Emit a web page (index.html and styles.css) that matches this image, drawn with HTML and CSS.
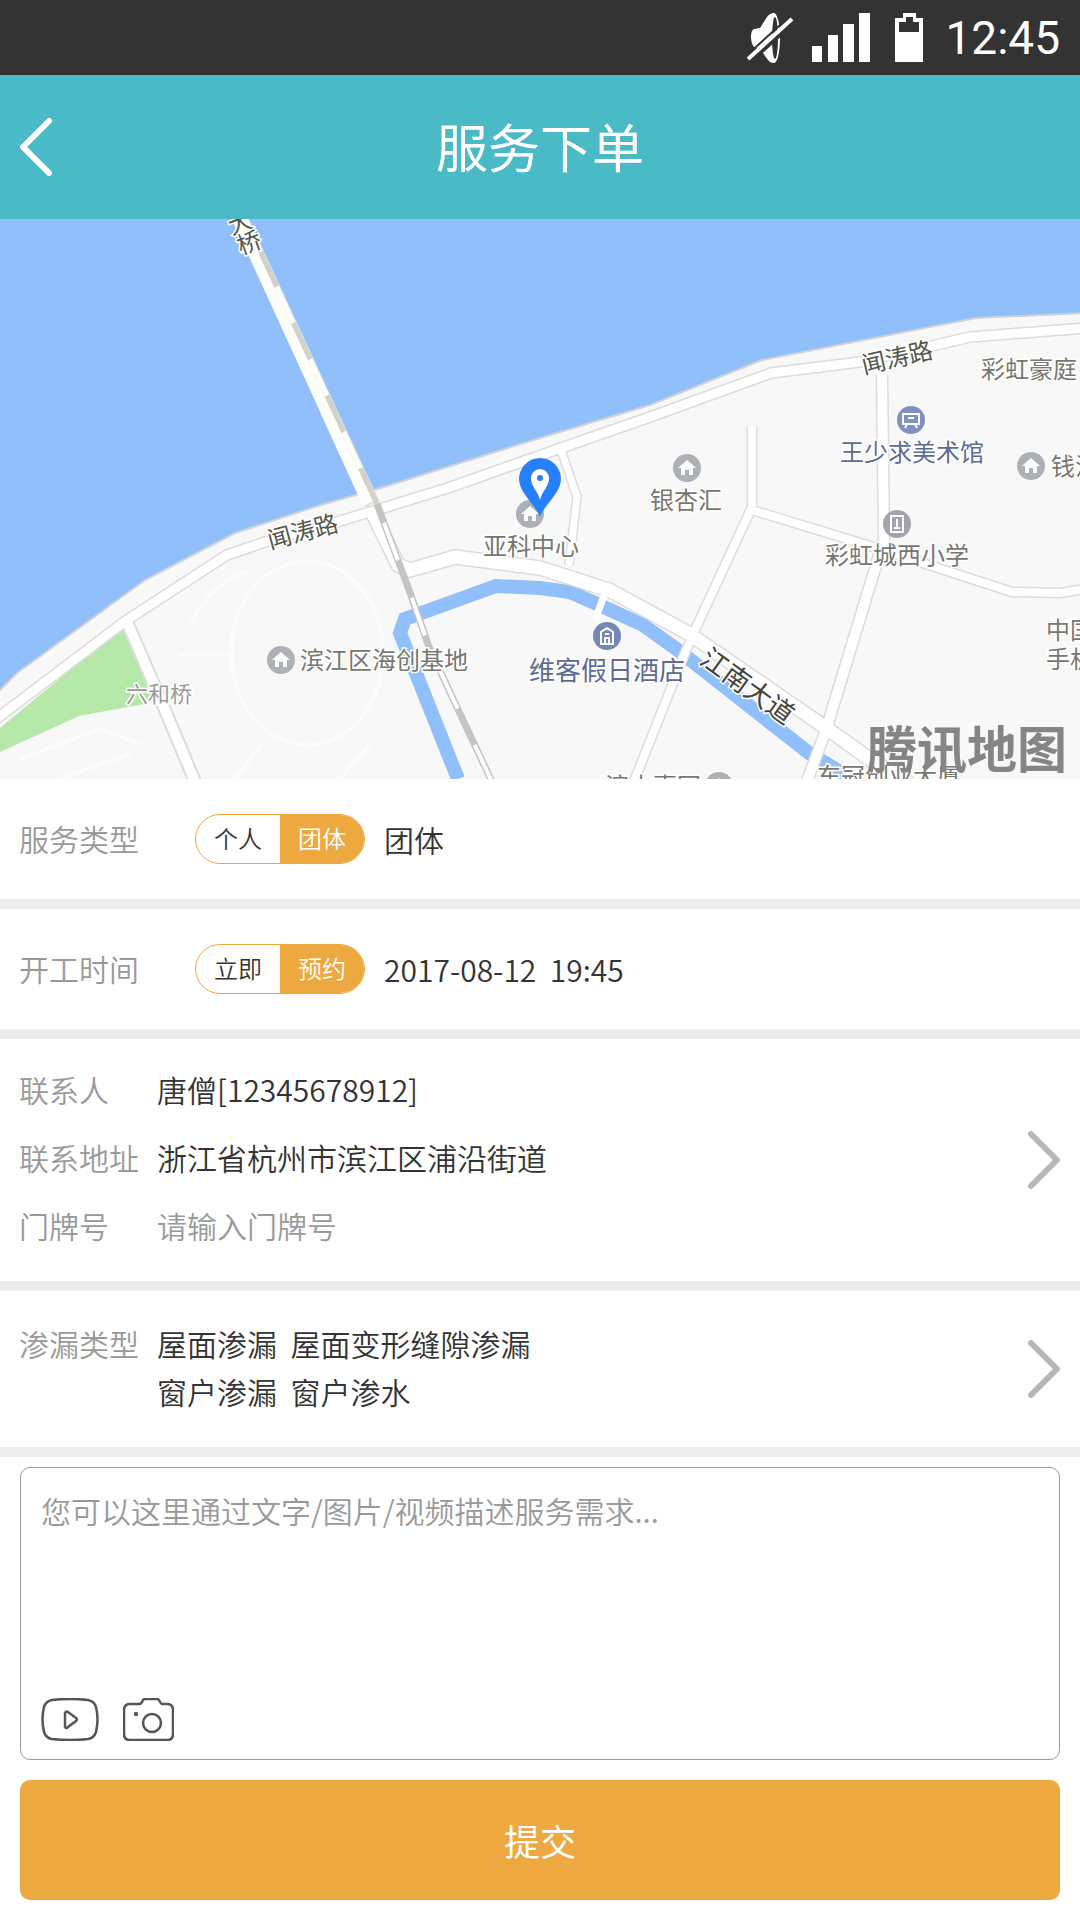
FILE: index.html
```html
<!DOCTYPE html>
<html lang="zh-CN">

<head>
    <meta charset="UTF-8">
    <meta name="viewport" content="width=device-width, initial-scale=1.0">
    <title>服务下单</title>
    <link rel="stylesheet" href="styles.css">
</head>

<body>
    <div class="status-bar">
        <svg class="mute" width="46" height="50" viewBox="0 0 46 50">
            <path d="M4 24 Q4 17 7 16 L13 15 L20 4 Q23 0 27 0 V50 Q23 50 21 47 L13 36 L7 34 Q4 30 4 24Z" fill="#fff" />
            <ellipse cx="27" cy="25" rx="6" ry="25" fill="#fff" />
            <ellipse cx="28" cy="25" rx="3" ry="21" fill="#333" />
            <path d="M3 49 L46 10" stroke="#333" stroke-width="4" />
            <path d="M-1 43 L43 3" stroke="#333" stroke-width="2" />
            <path d="M1 46 L45 6" stroke="#fff" stroke-width="4" />
        </svg>
        <svg class="signal" width="58" height="49" viewBox="0 0 58 49" fill="#fff">
            <path d="M0 33h10v16H0zM16 22h10v27H16zM31 11h11v38H31zM47 0h11v49H47z" />
        </svg>
        <svg class="battery" width="28" height="49" viewBox="0 0 28 49">
            <path fill="#fff" fill-rule="evenodd" d="M0 5h8V0h13v5h7v44H0zM4 9v10h20V9h-6V4h-7v5z" />
        </svg>
        <span class="time">12:45</span>
    </div>

    <header class="header">
        <a class="back" href="#" aria-label="返回">
            <svg width="32" height="58" viewBox="0 0 32 58">
                <path d="M29 3 L3 29 L29 55" />
            </svg>
        </a>
        <h1>服务下单</h1>
    </header>

    <svg class="map" viewBox="0 0 1080 560" preserveAspectRatio="xMidYMid slice" role="img" aria-label="地图">
        <defs>
            <g id="home">
                <circle r="14" fill="#adb0b4" />
                <path d="M0 -8 L9 0 H6 V7 H2 V2 H-2 V7 H-6 V0 H-9Z" fill="#fff" />
            </g>
        </defs>
        <rect width="1080" height="560" fill="#91bffb" />
        <!-- river bank -->
        <path d="M-5 476 L17 454 L145 361 L235 314 L324 285 L374 271 L540 219 L650 186 L762 141 L976 99 L1085 94 V565 H-5Z" fill="#f8f8f8" stroke="#cfd2d4" stroke-width="2" />
        <path d="M122 408 L146 464 L155 483 L79 497 L0 533 V509Z" fill="#b5e8a9" />

        <!-- paths inside the blocks -->
        <g class="paths">
            <ellipse cx="307" cy="434" rx="76" ry="92" />
            <path d="M190 405 Q215 360 250 352 M180 436 H232 M370 525 L340 560 M262 525 L235 560 M20 540 L100 510 L140 525 M60 560 L130 535" />
        </g>

        <!-- canal -->
        <path class="canal" d="M458 560 L400 414 L405 400 L496 367 L540 369 L570 373 L595 384 L643 406 L678 431 L809 534 L845 556" />

        <!-- roads, edges first and then the surface -->
        <g class="road-edge">
            <path stroke-width="12" d="M-5 501 L124 403 L227 336 L265 323 L337 303 L448 269 L561 229 L650 198 L771 154 L860 143 L936 126 L970 118 L1085 109" />
            <path stroke-width="14" d="M127 403 L162 484 L196 565" />
            <path stroke-width="16" d="M372 293 L398 346 L410 351 L455 338 L540 349 L609 371 L688 414 L829 511 L871 541 L910 565" />
            <path stroke-width="10" d="M561 231 L577 278 L569 346" />
            <path stroke-width="11" d="M752 208 V288 L695 411 L685 434 L633 565" />
            <path stroke-width="11" d="M752 291 L867 326 L1012 373 L1060 374 L1085 370" />
            <path stroke-width="13" d="M882 156 L884 320 L826 511 L806 565" />
        </g>
        <g class="road">
            <path stroke-width="9" d="M-5 501 L124 403 L227 336 L265 323 L337 303 L448 269 L561 229 L650 198 L771 154 L860 143 L936 126 L970 118 L1085 109" />
            <path stroke-width="10" d="M127 403 L162 484 L196 565" />
            <path stroke-width="13" d="M372 293 L398 346 L410 351 L455 338 L540 349 L609 371 L688 414 L829 511 L871 541 L910 565" />
            <path stroke-width="7" d="M561 231 L577 278 L569 346" />
            <path stroke-width="8" d="M752 208 V288 L695 411 L685 434 L633 565" />
            <path stroke-width="8" d="M752 291 L867 326 L1012 373 L1060 374 L1085 370" />
            <path stroke-width="10" d="M882 156 L884 320 L826 511 L806 565" />
            <path stroke-width="7" d="M605 374 L595 401" />
        </g>

        <!-- bridge and railway -->
        <path d="M238 -5 L372 285" stroke="#dcdfdc" stroke-width="16" />
        <path d="M236 -5 L368 285" stroke="#fdfdf9" stroke-width="11" />
        <path d="M243 -5 L377 285" stroke="#d2d2cb" stroke-width="5" />
        <path d="M243 -5 L377 285" stroke="#fdfdf9" stroke-width="5" stroke-dasharray="40 40" />
        <path d="M377 285 L408 368 L429 428 L455 484 L493 565" fill="none" stroke="#c4c4c4" stroke-width="7" />
        <path d="M377 285 L408 368 L429 428 L455 484 L493 565" fill="none" stroke="#fff" stroke-width="4" stroke-dasharray="40 40" stroke-dashoffset="60" />

        <!-- places -->
        <use href="#home" x="687" y="249" />
        <use href="#home" x="1031" y="247" />
        <use href="#home" x="281" y="441" />
        <use href="#home" x="530" y="295" />
        <use href="#home" x="719" y="567" />
        <circle cx="911" cy="201" r="14" fill="#8191bd" />
        <path d="M903 195h16v10h-16zM905 209l2-4M917 209l-2-4M908 199h6" fill="none" stroke="#fff" stroke-width="2" />
        <circle cx="897" cy="305" r="14" fill="#a3a3ad" />
        <path d="M891 297h12v16h-12zM897 300v9M894 309h6" fill="none" stroke="#fff" stroke-width="2" />
        <circle cx="607" cy="417" r="14" fill="#7587b8" />
        <path d="M601 425v-12l6-4l6 4v12zM605 425v-6h4v6M605 415h4" fill="none" stroke="#fff" stroke-width="2" />

        <g class="place">
            <text x="650" y="290">银杏汇</text>
            <text x="981" y="159">彩虹豪庭</text>
            <text x="1051" y="256">钱江</text>
            <text x="825" y="345">彩虹城西小学</text>
            <text x="1046" y="420">中国</text>
            <text x="1046" y="449">手机</text>
            <text x="483" y="336">亚科中心</text>
            <text x="300" y="450">滨江区海创基地</text>
            <text x="817" y="566">东冠创业大厦</text>
            <text x="605" y="576">滨水嘉园</text>
            <text class="place-blue" x="840" y="242">王少求美术馆</text>
            <text class="place-blue place-big" x="529" y="461">维客假日酒店</text>
            <text class="place-light" x="126" y="483">六和桥</text>
        </g>
        <g class="street">
            <text transform="translate(305 321) rotate(-15)">闻涛路</text>
            <text transform="translate(899 147) rotate(-13)">闻涛路</text>
            <text class="street-main" transform="translate(742 475) rotate(36)">江南大道</text>
            <text transform="translate(243 12) rotate(-20)">大</text>
            <text transform="translate(252 32) rotate(-20)">桥</text>
        </g>
        <text class="map-brand" x="867" y="549">腾讯地图</text>

        <!-- current position -->
        <path d="M540 298 C536 286 519 274 519 260 A21 21 0 0 1 561 260 C561 274 544 286 540 298Z" fill="#2680fb" />
        <path d="M540 281 C538 272 531 268 531 259 A9 9 0 0 1 549 259 C549 268 542 272 540 281Z" fill="#fff" />
        <circle cx="540" cy="259" r="3" fill="#2680fb" />
    </svg>

    <form class="order">
        <div class="row">
            <span class="label" id="type-label">服务类型</span>
            <div class="switch" role="radiogroup" aria-labelledby="type-label">
                <input type="radio" id="person" name="type">
                <label for="person">个人</label>
                <input type="radio" id="group" name="type" checked>
                <label for="group">团体</label>
            </div>
            <span class="value">团体</span>
        </div>

        <div class="row">
            <span class="label" id="time-label">开工时间</span>
            <div class="switch" role="radiogroup" aria-labelledby="time-label">
                <input type="radio" id="now" name="start">
                <label for="now">立即</label>
                <input type="radio" id="later" name="start" checked>
                <label for="later">预约</label>
            </div>
            <span class="value">2017-08-12&nbsp; 19:45</span>
        </div>

        <div class="block contact">
            <div class="fields">
                <span class="label">联系人</span>
                <span class="value">唐僧[12345678912]</span>
                <span class="label">联系地址</span>
                <span class="value">浙江省杭州市滨江区浦沿街道</span>
                <label class="label" for="door">门牌号</label>
                <input type="text" id="door" placeholder="请输入门牌号">
            </div>
            <button type="button" class="more" aria-label="选择联系人">
                <svg width="32" height="58" viewBox="0 0 32 58"><path d="M3 3 L29 29 L3 55" /></svg>
            </button>
        </div>

        <div class="block leak">
            <div class="fields">
                <span class="label">渗漏类型</span>
                <span class="value">屋面渗漏&nbsp; 屋面变形缝隙渗漏<br>窗户渗漏&nbsp; 窗户渗水</span>
            </div>
            <button type="button" class="more" aria-label="选择渗漏类型">
                <svg width="32" height="58" viewBox="0 0 32 58"><path d="M3 3 L29 29 L3 55" /></svg>
            </button>
        </div>

        <div class="bottom">
            <div class="describe">
                <textarea rows="4" aria-label="服务需求" placeholder="您可以这里通过文字/图片/视频描述服务需求..."></textarea>
                <div class="tools">
                    <button type="button" aria-label="视频">
                        <svg width="58" height="43" viewBox="0 0 58 43" stroke-width="2.5">
                            <path d="M11 2 Q29 0 47 2 Q53 3 55 9 Q58 21 55 34 Q53 40 47 41 Q29 43 11 41 Q5 40 3 34 Q0 21 3 9 Q5 3 11 2Z" />
                            <path d="M24 15 V29 Q25 31 27 29 L35 23 Q37 21 35 20 L27 14 Q25 13 24 15Z" />
                        </svg>
                    </button>
                    <button type="button" aria-label="拍照">
                        <svg width="51" height="43" viewBox="0 0 51 43" stroke-width="2.5">
                            <path d="M7 6 H16 Q18 6 19 4 Q20 1 22 1 H34 Q36 1 37 4 Q38 6 40 6 H44 Q50 6 50 12 V36 Q50 42 44 42 H7 Q1 42 1 36 V12 Q1 6 7 6Z" />
                            <circle cx="29" cy="25" r="9" />
                            <circle cx="13" cy="16" r="1" />
                        </svg>
                    </button>
                </div>
            </div>
            <button type="submit" class="submit">提交</button>
        </div>
    </form>
</body>

</html>
```
FILE: styles.css
```css
* {
    box-sizing: border-box;
}

body {
    margin: 0;
    background-color: #fff;
    color: #333;
    font-family: "Noto Sans CJK SC", sans-serif;
    font-size: 30px;
    font-weight: 350;
}

button,
input,
textarea {
    margin: 0;
    padding: 0;
    border: none;
    background: none;
    color: inherit;
    font: inherit;
}

button {
    cursor: pointer;
}

svg {
    display: block;
}

.status-bar {
    display: flex;
    justify-content: flex-end;
    align-items: center;
    height: 75px;
    padding: 0 20px;
    background-color: #333;
    color: #fff;
}

.signal {
    margin-left: 19px;
}

.battery {
    margin: 0 22px 0 25px;
}

.time {
    font-family: Roboto, sans-serif;
    font-size: 46px;
    font-weight: 400;
}

.header {
    position: relative;
    display: flex;
    justify-content: center;
    align-items: center;
    height: 144px;
    background-color: #49bac6;
    color: #fff;
}

.header h1 {
    margin: 0;
    padding-bottom: 4px;
    font-size: 52px;
    font-weight: 400;
}

.back {
    position: absolute;
    left: 20px;
}

.back path,
.more path {
    fill: none;
    stroke: #fff;
    stroke-width: 6px;
    stroke-linecap: round;
    stroke-linejoin: round;
}

/* map */
.map {
    width: 100%;
    height: 560px;
}

.map text {
    font-weight: 400;
}

.paths {
    fill: none;
    stroke: #fcfcfc;
    stroke-width: 4px;
}

.canal {
    fill: none;
    stroke: #91bffb;
    stroke-width: 14px;
}

.road-edge {
    fill: none;
    stroke: #dcdcdc;
    stroke-linejoin: round;
}

.road {
    fill: none;
    stroke: #fff;
    stroke-linejoin: round;
}

.place,
.street {
    paint-order: stroke;
    stroke: #fff;
    stroke-width: 3px;
    fill: #77776f;
    font-size: 24px;
}

.place-blue {
    fill: #5c6a94;
}

.place-big {
    font-size: 26px;
}

.place-light {
    fill: #999;
    font-size: 22px;
}

.street {
    fill: #55554c;
    font-size: 24px;
    text-anchor: middle;
}

.street-main {
    fill: #44443c;
    font-size: 27px;
}

.map .map-brand {
    fill: #858585;
    font-size: 50px;
    font-weight: 700;
}

/* form rows */
.row,
.block {
    display: flex;
    align-items: center;
    padding: 0 20px 0 19px;
    border-bottom: 10px solid #ededed;
}

.row {
    height: 130px;
}

.label {
    color: #999;
}

.row .label {
    padding-bottom: 3px;
}

.switch {
    display: flex;
    width: 170px;
    height: 50px;
    margin: 0 19px 0 56px;
    border: 1px solid #eda840;
    border-radius: 25px;
    overflow: hidden;
    font-size: 24px;
    line-height: 46px;
}

.switch input {
    position: absolute;
    opacity: 0;
}

.switch label {
    flex: 1;
    text-align: center;
}

.switch input:checked + label {
    background-color: #eda840;
    color: #fff;
}

.block {
    justify-content: space-between;
}

.fields {
    display: grid;
    flex: 1;
    grid-template-columns: 138px 1fr;
}

.contact .fields {
    padding: 16px 0 22px;
    line-height: 68px;
}

.contact input {
    width: 100%;
    height: 68px;
}

.leak .fields {
    padding: 28px 0 32px;
    line-height: 48px;
}

.more path {
    stroke: #b4b7b6;
}

::placeholder {
    color: #999;
    opacity: 1;
}

/* description and submit */
.bottom {
    padding: 10px 20px 20px;
}

.describe {
    padding: 18px 20px;
    border: 1px solid #999;
    border-radius: 10px;
}

.describe textarea {
    display: block;
    width: 100%;
    line-height: 48px;
    resize: none;
}

.tools {
    display: flex;
    gap: 24px;
    margin-top: 20px;
}

.tools svg {
    fill: none;
    stroke: #555;
}

.submit {
    display: block;
    width: 100%;
    height: 120px;
    margin-top: 20px;
    border-radius: 10px;
    background-color: #eda840;
    color: #fff;
    font-size: 36px;
    font-weight: 400;
}
```
